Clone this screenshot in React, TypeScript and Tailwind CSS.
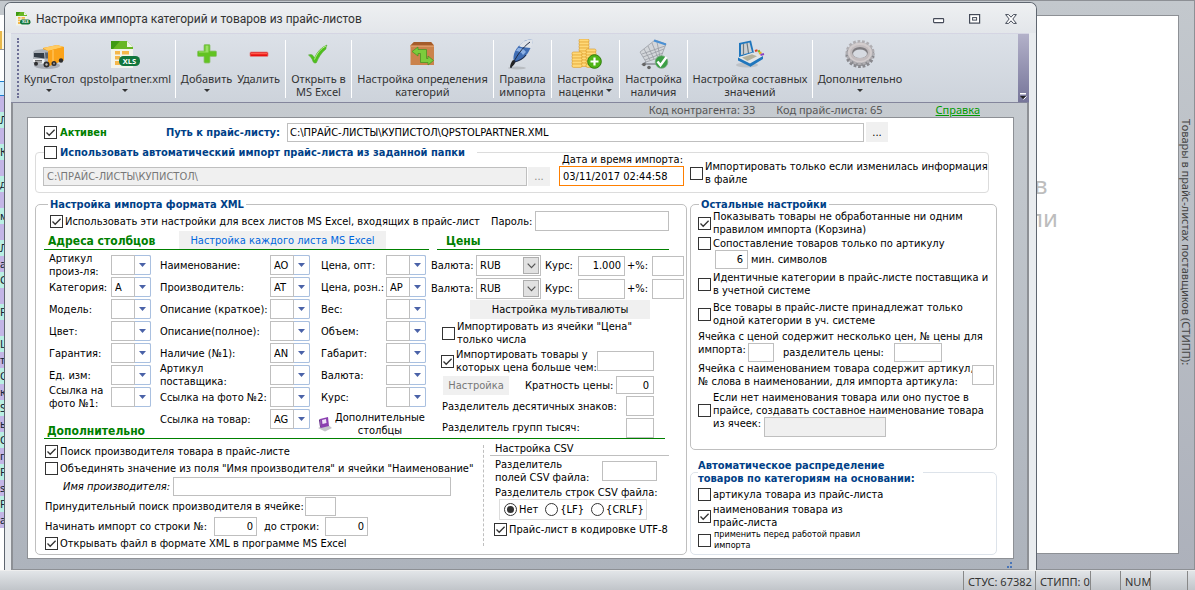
import { useId, type ReactNode } from "react";

/* ---------- basic controls ---------- */

type CheckProps = {
  children: ReactNode;
  checked?: boolean;
  className?: string;
  gap?: string;
};

function Check({ children, checked = false, className = "", gap = "gap-[2px]" }: CheckProps) {
  return (
    <label className={`flex items-center whitespace-nowrap ${gap} ${className}`}>
      <span className="relative block h-[13px] w-[13px] shrink-0">
        <input
          type="checkbox"
          defaultChecked={checked}
          className="peer block h-[13px] w-[13px] appearance-none border border-[#333] bg-white"
        />
        <svg
          viewBox="0 0 13 13"
          className="pointer-events-none absolute inset-0 hidden h-[13px] w-[13px] peer-checked:block"
        >
          <path d="M2.5 6.5 5.2 9.3 10.6 3.7" fill="none" stroke="#333" strokeWidth="1.3" />
        </svg>
      </span>
      <span>{children}</span>
    </label>
  );
}

function Radio({ label, checked = false }: { label: string; checked?: boolean }) {
  return (
    <label className="flex items-center gap-[2px] whitespace-nowrap">
      <span className="relative block h-[13px] w-[13px] shrink-0">
        <input
          type="radio"
          name="row-separator"
          defaultChecked={checked}
          className="peer block h-[13px] w-[13px] appearance-none rounded-full border border-[#333] bg-white"
        />
        <span className="pointer-events-none absolute inset-[3px] hidden rounded-full bg-[#333] peer-checked:block" />
      </span>
      {label}
    </label>
  );
}

type BoxProps = { label: string; value?: string; className?: string; disabled?: boolean };

function Box({ label, value = "", className = "", disabled = false }: BoxProps) {
  return (
    <input
      type="text"
      aria-label={label}
      defaultValue={value}
      disabled={disabled}
      className={`block h-5 shrink-0 rounded-none border border-[#bfbfbf] px-[3px] outline-none ${
        disabled ? "bg-[#f0f0f0] text-[#777]" : "bg-white"
      } ${className}`}
    />
  );
}

/* Column picker: narrow value cell and a separate arrow cell */
function Combo({ id, value = "" }: { id: string; value?: string }) {
  return (
    <span className="relative flex h-5 w-10 shrink-0">
      <select
        id={id}
        defaultValue={value}
        className="h-5 w-10 appearance-none rounded-r-[2px] border border-[#bfbfbf] border-r-[#a9c0e0] bg-white pl-[3px]"
      >
        <option value={value}>{value}</option>
      </select>
      <span className="pointer-events-none absolute top-0 right-0 flex h-5 w-[17px] items-center justify-center rounded-r-[2px] border border-[#a9c0e0] border-l-[#bfbfbf]">
        <svg viewBox="0 0 7 4" className="h-1 w-[7px]">
          <path d="M0 0h7L3.500 4z" fill="#4a62a8" />
        </svg>
      </span>
    </span>
  );
}

function Currency({ id }: { id: string }) {
  return (
    <span className="relative flex h-[21px] w-[65px] shrink-0">
      <select id={id} className="h-[21px] w-[65px] appearance-none border border-[#bfbfbf] bg-white pl-[3px]">
        <option>RUB</option>
      </select>
      <span className="pointer-events-none absolute top-[2px] right-[2px] flex h-[17px] w-4 items-center justify-center border border-[#adadad] bg-[#e1e1e1]">
        <svg viewBox="0 0 9 6" className="h-[6px] w-[9px]">
          <path d="M.7.7 4.500 4.700 8.300.7" fill="none" stroke="#555" strokeWidth="1.200" />
        </svg>
      </span>
    </span>
  );
}

function ColumnField({ label, value, width }: { label: ReactNode; value?: string; width: string }) {
  const id = useId();
  return (
    <div className="flex h-[22px] items-center">
      <label htmlFor={id} className={`shrink-0 whitespace-nowrap ${width}`}>
        {label}
      </label>
      <Combo id={id} value={value} />
    </div>
  );
}

const plainButton = "bg-[#f0f0f0] text-center whitespace-nowrap";

/* ---------- toolbar icons ---------- */

const ic = "h-8 w-8";

function TruckIcon() {
  return (
    <svg viewBox="0 0 32 32" className={ic}>
      <ellipse cx="14" cy="26.500" rx="13" ry="3.500" fill="#7d828c" opacity=".5" />
      <path d="M10 9 24 6l7 2v13l-15 6-6-4z" fill="#f59a0c" />
      <path d="m10 9 14-3 7 2-16 4z" fill="#ffcb62" />
      <path d="M15 12 31 8v13l-15 6z" fill="#fba31a" />
      <path d="M20 11v14" stroke="#ffb945" strokeWidth="2" />
      <path d="M0 14c0-1.500 1-2.500 3-3l7-1 5 2v13l-3 2-12-3z" fill="#aeb4bb" />
      <path d="M1 14h10l.5 5.500L1 18z" fill="#333c46" />
      <path d="M12 13.500h3v6h-2.500z" fill="#59636e" />
      <path d="M0 20h11.500v5L0 23z" fill="#eef0f2" />
      <path d="M2 21.500h7M2 23h7" stroke="#444" strokeWidth=".8" />
      <g fill="#2e2e30">
        <circle cx="13.500" cy="25.500" r="3" />
        <circle cx="3" cy="24.800" r="2" />
        <circle cx="21" cy="24.500" r="2.500" />
        <circle cx="28" cy="21.500" r="2.200" />
      </g>
      <circle cx="13.500" cy="25.500" r="1.200" fill="#bbb" />
      <circle cx="21" cy="24.500" r="1" fill="#999" />
    </svg>
  );
}

function XlsIcon({ className = ic }: { className?: string }) {
  return (
    <svg viewBox="0 0 32 32" className={className}>
      <path d="M2 2h16l6 6v21H2z" fill="#f2f4ec" />
      <path d="M2 2h16l6 6v2H2z" fill="#68b723" />
      <path d="M2 2h9L4 10H2z" fill="#3f9a14" />
      <path d="m18 2 6 6h-6z" fill="#eef6e4" />
      <g fill="#f5b84a">
        <path d="M6 12h5v3.500H6zM13 12h7v3.500h-7zM6 17h5v3.500H6zM13 17h7v3.500h-7zM6 22h5v4H6zM13 22h7v4h-7z" />
      </g>
      <rect x="10" y="17" width="21" height="10" rx="4.500" fill="#11763c" />
      <text
        x="20.500"
        y="24.800"
        textAnchor="middle"
        fontSize="7.500"
        fontWeight="700"
        fill="#fff"
        fontFamily="Open Sans, sans-serif"
      >
        XLS
      </text>
    </svg>
  );
}

function PlusIcon() {
  return (
    <svg viewBox="0 0 32 32" className={ic}>
      <path
        d="M14 5.500h4a1 1 0 0 1 1 1V12h5.500a1 1 0 0 1 1 1v3.500a1 1 0 0 1-1 1H19V23a1 1 0 0 1-1 1h-4a1 1 0 0 1-1-1v-5.500H7.500a1 1 0 0 1-1-1V13a1 1 0 0 1 1-1H13V6.500a1 1 0 0 1 1-1z"
        fill="#62c322"
        stroke="#8fc074"
        strokeWidth=".8"
      />
      <path d="M14.500 6.500h3V13.500H8v-1h6.500z" fill="#9be067" />
    </svg>
  );
}

function MinusIcon() {
  return (
    <svg viewBox="0 0 32 32" className={ic}>
      <rect x="7" y="13" width="18" height="4.500" rx="1" fill="#e81010" stroke="#d88" strokeWidth=".8" />
      <path d="M8 14h16v1.300H8z" fill="#ff5a4a" />
    </svg>
  );
}

function TickIcon() {
  return (
    <svg viewBox="0 0 32 32" className={ic}>
      <path
        d="M6.500 16c3-1.500 5 .5 6 3C15 13 19 8.500 25 6c-1 1.500-1 3-1 4-5 4-7.500 8.500-9.500 13.500-1 1-3 .5-3.500-1-1-3-2-4.500-4.500-6.500z"
        fill="#4fc01d"
        stroke="#5aa83a"
        strokeWidth=".6"
      />
      <path d="M12.500 20.500C15 14 19 9.500 24 7" fill="none" stroke="#b6ee8d" strokeWidth="1" />
    </svg>
  );
}

function CrateIcon() {
  return (
    <svg viewBox="0 0 32 32" className={ic}>
      <path d="M8 3h17l3 3.500V26H4.500V6.500z" fill="#cb834c" />
      <path d="M8 3h17l3 3.500H4.500z" fill="#a55c2a" />
      <path d="M4.500 6.500H28V8H4.500z" fill="#dc9a66" />
      <path
        d="m6 12.500 6-4.500v2.500h8.500v9H22V17l5.500 4.500L22 26v-2.500h-7.500v-9H12V17z"
        fill="#7ccc3c"
        stroke="#3f9420"
        strokeWidth=".7"
      />
    </svg>
  );
}

function FeatherIcon() {
  return (
    <svg viewBox="0 0 32 32" className={ic}>
      <ellipse cx="11" cy="29" rx="9" ry="1.500" fill="#888" opacity=".35" />
      <path d="M27 0C18 0 10 8 8 15c-1 4-.5 6 0 8 6-1 12-5 15-11 2-4 4-8 4-12z" fill="#3f6db4" />
      <path d="M27 0c-6 0-11 3-14 7l2 1 10 1c1.500-3 2-6 2-9z" fill="#dfe3e9" />
      <path d="M12 9c3-.5 6 1 8 4l-3 3c-2-3-4-4-7-4z" fill="#8cb0e4" />
      <path d="M24 3C16 9 10 17 5 29" fill="none" stroke="#1f2b44" strokeWidth="1" />
      <path d="M4 29c0-3 1-6 3-8l3 1c-1 3-3 5-6 7z" fill="#222" />
      <path d="M8 23c5-1 9-3 12-7" stroke="#1d2c4d" strokeWidth="1.200" fill="none" />
    </svg>
  );
}

function CoinStack({ x, y, n }: { x: number; y: number; n: number }) {
  return (
    <g>
      {Array.from({ length: n }, (_, i) => (
        <rect
          key={i}
          x={x}
          y={y + i * 3}
          width="10"
          height="3.400"
          rx="1.500"
          fill="#ffd978"
          stroke="#d9961f"
          strokeWidth=".6"
        />
      ))}
    </g>
  );
}

function CoinsIcon() {
  return (
    <svg viewBox="0 0 32 32" className={ic}>
      <CoinStack x={9} y={0} n={9} />
      <CoinStack x={16} y={10} n={6} />
      <CoinStack x={2} y={13} n={5} />
      <circle cx="24.500" cy="22.500" r="6.800" fill="#4fb516" stroke="#2d7d0a" />
      <path d="M24.500 18.500v8M20.500 22.500h8" stroke="#fff" strokeWidth="2.200" />
    </svg>
  );
}

function CartIcon() {
  return (
    <svg viewBox="0 0 32 32" className={ic}>
      <path d="m2 13 15-12 11 4-5 13-15 5z" fill="#d3d6da" stroke="#9a9ea5" strokeWidth=".8" />
      <path
        d="m4 15 23-8M5 18l21-8M7 21l18-7M6 10l6 11M10 7l6 13M14 4l6 15M19 3l3 15"
        stroke="#989ca3"
        strokeWidth=".8"
      />
      <path d="m16 1.500 12 4" stroke="#4a90d4" strokeWidth="2" />
      <path d="m8 23-3 2h14" stroke="#8a8f96" strokeWidth="1.300" fill="none" />
      <circle cx="6" cy="25.500" r="1.800" fill="#666" />
      <circle cx="11" cy="28.500" r="1.800" fill="#666" />
      <circle cx="23.500" cy="23" r="6.300" fill="#3c9f45" stroke="#7fa987" strokeWidth=".8" />
      <path d="m19.500 22.500 3 3.800 6-8.300" fill="none" stroke="#fff" strokeWidth="2.400" />
    </svg>
  );
}

function ScannerIcon() {
  return (
    <svg viewBox="0 0 32 32" className={ic}>
      <ellipse cx="13" cy="26" rx="11" ry="2.500" fill="#888" opacity=".3" />
      <path d="M5 4 17 1.500 20 14 5 18z" fill="#1f76bd" />
      <path d="m7 5.500 8.500-2L18 13 7 16z" fill="#cdd2d5" />
      <path d="M9.500 5v10.500M13 4l1.500 10" stroke="#6e7a82" strokeWidth="1.200" />
      <path d="m4 18.500 15-5 10 3.500-13 8z" fill="#e2e5e6" />
      <path d="m4 18.500 12 6v3L4 21.500zM16 24.500 29 17v3l-13 8z" fill="#1f76bd" />
      <path d="m8 18.500 10-3.300 5 2-9.500 4.800z" fill="#b3b19c" />
      <path d="m21 12 2.500-.8" stroke="#e04020" strokeWidth="2" />
      <path d="m24 12.500 2-.8" stroke="#7ab82a" strokeWidth="2" />
      <path d="m25 14.500 2.500-1" stroke="#e8b020" strokeWidth="2" />
      <path d="m26.500 16 3.500-1" stroke="#8a40c0" strokeWidth="2" />
    </svg>
  );
}

function GearIcon() {
  return (
    <svg viewBox="0 0 32 32" className={ic}>
      <ellipse cx="16" cy="16.500" rx="12.500" ry="10.500" fill="#98989c" stroke="#88888d" strokeWidth="4" strokeDasharray="2.600 1.700" />
      <ellipse cx="16" cy="13.500" rx="12.500" ry="10.500" fill="#bfbdc0" stroke="#b0aeb2" strokeWidth="4" strokeDasharray="2.600 1.700" />
      <ellipse cx="16" cy="13.500" rx="12" ry="10" fill="#d2cccd" />
      <ellipse cx="16" cy="14" rx="10" ry="8" fill="#c2bcbe" />
      <ellipse cx="16" cy="13.500" rx="7.800" ry="5.500" fill="#7e7c80" />
      <ellipse cx="16" cy="14.800" rx="7" ry="4.300" fill="#d6dae1" />
    </svg>
  );
}

function Arrow() {
  return (
    <svg viewBox="0 0 6 3" className="inline-block h-[3px] w-[6px] align-[4px]">
      <path d="M0 0h6L3 3z" fill="#333" />
    </svg>
  );
}

function ToolButton({ icon, children }: { icon: ReactNode; children: ReactNode }) {
  return (
    <button className="flex flex-col items-center whitespace-nowrap text-center leading-[13px]">
      {icon}
      <span className="mt-px">{children}</span>
    </button>
  );
}

function ToolGroup({ width, children }: { width: string; children: ReactNode }) {
  return <div className={`flex shrink-0 items-start justify-center gap-[5px] ${width}`}>{children}</div>;
}

function Divider() {
  return <div className="my-px h-[58px] w-px shrink-0 bg-white" />;
}

function Toolbar() {
  return (
    <div className="flex h-[70px] border-t border-b border-t-[#d5d5e3] border-b-[#84869c] bg-linear-to-b from-[#dce1e8] to-[#cdd3db] text-[11px] text-[#333]">
      <div className="mt-1 ml-[6px] h-[60px] border-l-2 border-dotted border-[#6d6f96]" />
      <div className="ml-px flex flex-1 items-start overflow-hidden pt-[5px]">
        <ToolGroup width="w-[155px]">
          <ToolButton icon={<TruckIcon />}>
            КупиСтол
            <br />
            <Arrow />
          </ToolButton>
          <ToolButton icon={<XlsIcon />}>
            qpstolpartner.xml
            <br />
            <Arrow />
          </ToolButton>
        </ToolGroup>
        <Divider />
        <ToolGroup width="w-[109px]">
          <ToolButton icon={<PlusIcon />}>
            Добавить
            <br />
            <Arrow />
          </ToolButton>
          <ToolButton icon={<MinusIcon />}>Удалить</ToolButton>
        </ToolGroup>
        <Divider />
        <ToolGroup width="w-[65px]">
          <ToolButton icon={<TickIcon />}>
            Открыть в<br />
            MS Excel
          </ToolButton>
        </ToolGroup>
        <Divider />
        <ToolGroup width="w-[141px]">
          <ToolButton icon={<CrateIcon />}>
            Настройка определения
            <br />
            категорий
          </ToolButton>
        </ToolGroup>
        <Divider />
        <ToolGroup width="w-[57px]">
          <ToolButton icon={<FeatherIcon />}>
            Правила
            <br />
            импорта
          </ToolButton>
        </ToolGroup>
        <Divider />
        <ToolGroup width="w-[67px]">
          <ToolButton icon={<CoinsIcon />}>
            Настройка
            <br />
            наценки <Arrow />
          </ToolButton>
        </ToolGroup>
        <Divider />
        <ToolGroup width="w-[67px]">
          <ToolButton icon={<CartIcon />}>
            Настройка
            <br />
            наличия
          </ToolButton>
        </ToolGroup>
        <Divider />
        <ToolGroup width="w-[124px]">
          <ToolButton icon={<ScannerIcon />}>
            Настройка составных
            <br />
            значений
          </ToolButton>
        </ToolGroup>
        <Divider />
        <ToolGroup width="w-[94px]">
          <ToolButton icon={<GearIcon />}>
            Дополнительно
            <br />
            <Arrow />
          </ToolButton>
        </ToolGroup>
      </div>
      <button
        aria-label="Параметры панели"
        className="flex w-[11px] items-end justify-center bg-linear-to-b from-[#b3b1c9] to-[#77769a] pb-[2px]"
      >
        <svg viewBox="0 0 7 7" className="h-[7px] w-[7px]">
          <path d="M0 0h6v1.500H0z" fill="#fff" />
          <path d="M0 3h6L3 6z" fill="#222" />
          <path d="m3.500 6.500 3-3" stroke="#fff" />
        </svg>
      </button>
    </div>
  );
}

/* ---------- form sections ---------- */

function TitleBar() {
  return (
    <header className="flex h-[30px] items-center bg-linear-to-b from-[#eef0f2] to-[#e3e6ea] pt-[2px] pr-[19px] pl-[10px] font-['Roboto','Noto_Sans',sans-serif] text-[12px] text-[#333]">
      <XlsIcon className="h-4 w-4" />
      <h1 className="ml-[5px] flex-1">Настройка импорта категорий и товаров из прайс-листов</h1>
      <div className="flex gap-6">
        <button aria-label="Свернуть">
          <svg viewBox="0 0 12 12" className="h-3 w-3">
            <rect x=".6" y="5.600" width="10" height="4" rx=".5" fill="#fff" stroke="#444a58" strokeWidth="1.100" />
          </svg>
        </button>
        <button aria-label="Развернуть">
          <svg viewBox="0 0 12 12" className="h-3 w-3">
            <rect x=".6" y="1.600" width="10" height="8.500" fill="#fff" stroke="#444a58" strokeWidth="1.200" />
            <rect x="3.600" y="4.600" width="4" height="2.500" fill="#fff" stroke="#444a58" />
          </svg>
        </button>
        <button aria-label="Закрыть">
          <svg viewBox="0 0 12 12" className="h-3 w-3">
            <path
              d="M.6 1.600h3L6 4.200l2.400-2.600h3L7.800 6l3.600 4.400h-3L6 7.800l-2.400 2.600h-3L4.200 6z"
              fill="#fff"
              stroke="#444a58"
              strokeWidth="1"
            />
          </svg>
        </button>
      </div>
    </header>
  );
}

function PathRow() {
  return (
    <div className="ml-[9px] flex h-5 items-center">
      <Check checked className="w-[122px] font-bold text-[#008000]" gap="gap-[3px]">
        Активен
      </Check>
      <label htmlFor="price-path" className="w-[121px] font-bold whitespace-nowrap text-[#003f87]">
        Путь к прайс-листу:
      </label>
      <input
        id="price-path"
        defaultValue="C:\ПРАЙС-ЛИСТЫ\КУПИСТОЛ\QPSTOLPARTNER.XML"
        className="h-[19px] min-w-0 flex-1 border border-[#bfbfbf] px-[2px] outline-none"
      />
      <button className={`${plainButton} mr-[109px] ml-[2px] h-5 w-[22px]`}>...</button>
    </div>
  );
}

function AutoImport() {
  return (
    <fieldset className="mt-[4px] mr-2 h-[47px] rounded-[4px] border border-[#dcdcdc] pl-[7px]">
      <legend className="ml-[1px] pr-3 leading-[13px]">
        <Check className="font-bold text-[#003f87]" gap="gap-[3px]">
          Использовать автоматический импорт прайс-листа из заданной папки
        </Check>
      </legend>
      <div className="-mt-[6px] flex items-end">
        <Box
          label="Папка с прайс-листами"
          value="C:\ПРАЙС-ЛИСТЫ\КУПИСТОЛ\"
          disabled
          className="h-[19px] w-0 min-w-0 flex-1"
        />
        <button disabled className={`${plainButton} ml-px h-[19px] w-[22px] text-[#888]`}>
          ...
        </button>
        <div className="ml-[9px] flex w-[125px] flex-col">
          <label htmlFor="import-date" className="pl-[3px] whitespace-nowrap">
            Дата и время импорта:
          </label>
          <input
            id="import-date"
            defaultValue="03/11/2017 02:44:58"
            className="h-5 border border-[#ff7f00] px-[3px] outline-none"
          />
        </div>
        <Check className="ml-[6px] w-[298px]">
          Импортировать только если изменилась информация
          <br />в файле
        </Check>
      </div>
    </fieldset>
  );
}

const columnsA: [ReactNode, string?][] = [
  [<>Артикул<br />произ-ля:</>],
  ["Категория:", "A"],
  ["Модель:"],
  ["Цвет:"],
  ["Гарантия:"],
  ["Ед. изм:"],
  [<>Ссылка на<br />фото №1:</>],
];

const columnsB: [ReactNode, string?][] = [
  ["Наименование:", "AO"],
  ["Производитель:", "AT"],
  ["Описание (краткое):"],
  ["Описание(полное):"],
  ["Наличие (№1):", "AN"],
  [<>Артикул<br />поставщика:</>],
  ["Ссылка на фото №2:"],
  ["Ссылка на товар:", "AG"],
];

const columnsC: [ReactNode, string?][] = [
  ["Цена, опт:"],
  ["Цена, розн.:", "AP"],
  ["Вес:"],
  ["Объем:"],
  ["Габарит:"],
  ["Валюта:"],
  ["Курс:"],
];

function ColumnAddresses() {
  return (
    <div className="flex pl-[13px]">
      <div className="flex w-[111px] flex-col">
        {columnsA.map(([label, value], i) => (
          <ColumnField key={i} label={label} value={value} width="w-[62px]" />
        ))}
        <h3 className="mt-auto -ml-[2px] text-[12px] leading-[13px] font-bold text-[#008000]">Дополнительно</h3>
      </div>
      <div className="w-[161px]">
        {columnsB.map(([label, value], i) => (
          <ColumnField key={i} label={label} value={value} width="w-[110px]" />
        ))}
      </div>
      <div className="w-[110px]">
        {columnsC.map(([label, value], i) => (
          <ColumnField key={i} label={label} value={value} width="w-[65px]" />
        ))}
        <button className="mt-[3px] -ml-[4px] flex items-center gap-[2px] whitespace-nowrap">
          <svg viewBox="0 0 16 16" className="h-4 w-4">
            <path d="m1 12 9-4 5 4-7 3.500z" fill="#c4c4ca" />
            <path d="m3 3 8-2 1 9-8 2z" fill="#8b3fb0" />
            <path d="m5 4 4-1 .5 4-4 1z" fill="#efe2f7" />
            <path d="m2 4 1-1 1 9-1-1z" fill="#5b2080" />
          </svg>
          <span>
            Дополнительные
            <br />
            столбцы
          </span>
        </button>
      </div>
    </div>
  );
}

function RateRow({ n, rate }: { n: number; rate?: string }) {
  return (
    <div className="flex h-[23px] items-center whitespace-nowrap">
      <label htmlFor={`currency-${n}`} className="w-[45px]">
        Валюта:
      </label>
      <Currency id={`currency-${n}`} />
      <span className="ml-1 w-[33px]">Курс:</span>
      <Box label={`Курс ${n}`} value={rate} className="w-[47px] text-right" />
      <span className="ml-[2px] w-[25px]">+%:</span>
      <Box label={`Процент ${n}`} className="w-8" />
    </div>
  );
}

function Prices() {
  return (
    <div className="w-[255px] shrink-0">
      <RateRow n={1} rate="1.000" />
      <RateRow n={2} />
      <button className={`${plainButton} ml-[39px] block h-[19px] w-[180px]`}>Настройка мультивалюты</button>
      <Check className="mt-px ml-[11px]">
        Импортировать из ячейки "Цена"
        <br />
        только числа
      </Check>
      <div className="mt-[2px] flex items-center">
        <Check checked className="ml-[10px] w-[156px]">
          Импортировать товары у<br />
          которых цена больше чем:
        </Check>
        <Box label="Минимальная цена" className="w-[57px]" />
      </div>
      <div className="mt-[1px] flex h-5 items-center">
        <button disabled className={`${plainButton} ml-3 h-[19px] w-[66px] text-[#777]`}>
          Настройка
        </button>
        <label htmlFor="multiplicity" className="ml-4 w-[91px] whitespace-nowrap">
          Кратность цены:
        </label>
        <input
          id="multiplicity"
          defaultValue="0"
          className="h-[18px] w-[38px] border border-[#bfbfbf] px-1 text-right outline-none"
        />
      </div>
      <div className="flex h-[22px] items-center">
        <span className="ml-[11px] w-[184px] whitespace-nowrap">Разделитель десятичных знаков:</span>
        <Box label="Разделитель десятичных знаков" className="w-7" />
      </div>
      <div className="flex h-[21px] items-center">
        <span className="ml-[11px] w-[184px] whitespace-nowrap">Разделитель групп тысяч:</span>
        <Box label="Разделитель групп тысяч" className="w-7" />
      </div>
    </div>
  );
}

function Extra() {
  return (
    <div className="flex flex-1">
      <div className="flex min-w-0 flex-1 flex-col pt-[4px] pl-[9px]">
        <Check checked className="h-[17px]">
          Поиск производителя товара в прайс-листе
        </Check>
        <Check className="h-[17px]">
          Объединять значение из поля "Имя производителя" и ячейки "Наименование"
        </Check>
        <div className="flex h-[19px] items-center">
          <label htmlFor="maker" className="ml-[18px] w-[110px] whitespace-nowrap italic">
            Имя производителя:
          </label>
          <input id="maker" className="mr-8 h-[19px] min-w-0 flex-1 border border-[#bfbfbf] outline-none" />
        </div>
        <div className="flex h-5 items-center">
          <span className="w-[260px] whitespace-nowrap">Принудительный поиск производителя в ячейке:</span>
          <Box label="Ячейка производителя" className="h-[19px] w-[31px]" />
        </div>
        <div className="flex h-5 items-center whitespace-nowrap">
          <span className="w-[169px]">Начинать импорт со строки №:</span>
          <Box label="Начальная строка" value="0" className="h-[19px] w-[43px] text-right" />
          <span className="ml-[7px] w-[61px]">до строки:</span>
          <Box label="Конечная строка" value="0" className="h-[19px] w-[43px] text-right" />
        </div>
        <Check checked className="h-[15px]">
          Открывать файл в формате XML в программе MS Excel
        </Check>
      </div>
      <div className="mt-[6px] mb-2 w-[203px] border-l border-dashed border-[#bfbfbf] pl-[6px]">
        <h4 className="-mt-[3px] mr-[17px] border-b border-[#bfbfbf] pl-[5px]">Настройка CSV</h4>
        <div className="mt-[2px] flex items-center pl-[5px]">
          <span className="w-[107px] whitespace-nowrap">
            Разделитель
            <br />
            полей CSV файла:
          </span>
          <Box label="Разделитель полей CSV файла" className="w-[55px]" />
        </div>
        <div className="mt-[2px] pl-[5px] whitespace-nowrap">Разделитель строк CSV файла:</div>
        <div className="ml-[9px] flex h-[21px] w-[148px] items-center gap-[7px] border border-[#dcdcdc] pl-1">
          <Radio label="Нет" checked />
          <Radio label="{LF}" />
          <Radio label="{CRLF}" />
        </div>
        <Check checked className="mt-[3px] ml-1">
          Прайс-лист в кодировке UTF-8
        </Check>
      </div>
    </div>
  );
}

function XmlSettings() {
  return (
    <fieldset className="flex min-w-0 flex-1 flex-col rounded-[5px] border border-[#bfbfbf]">
      <legend className="ml-3 px-[2px] leading-[13px] font-bold text-[#003f87]">Настройка импорта формата XML</legend>
      <div className="flex h-5 items-center">
        <Check checked className="ml-[14px] w-[441px]">
          Использовать эти настройки для всех листов MS Excel, входящих в прайс-лист
        </Check>
        <label htmlFor="password" className="w-[44px] whitespace-nowrap">
          Пароль:
        </label>
        <input
          id="password"
          type="password"
          className="mr-[17px] h-5 min-w-0 flex-1 border border-[#bfbfbf] outline-none"
        />
      </div>
      <div className="flex h-[19px] gap-2">
        <div className="ml-2 flex w-[385px] border-b border-[#008000]">
          <h3 className="w-[135px] pt-[4px] pl-1 text-[12px] font-bold text-[#008000]">Адреса столбцов</h3>
          <button className={`${plainButton} h-[18px] w-[207px] text-[#0066dd]`}>
            Настройка каждого листа MS Excel
          </button>
        </div>
        <h3 className="mr-[17px] flex-1 border-b border-[#008000] pt-[4px] pl-[9px] text-[12px] font-bold text-[#008000]">
          Цены
        </h3>
      </div>
      <div className="flex justify-between pt-[4px]">
        <ColumnAddresses />
        <Prices />
      </div>
      <div className="mr-[21px] ml-2 h-px bg-[#008000]" />
      <Extra />
    </fieldset>
  );
}

function OtherSettings() {
  return (
    <fieldset className="h-[252px] rounded-[5px] border border-[#bfbfbf] pl-[7px]">
      <legend className="ml-px px-[2px] leading-[13px] font-bold text-[#003f87]">Остальные настройки</legend>
      <div className="flex flex-col">
        <Check checked className="-mt-[1px]">
          Показывать товары не обработанные ни одним
          <br />
          правилом импорта (Корзина)
        </Check>
        <Check className="mt-[1px]">Сопоставление товаров только по артикулу</Check>
        <div className="flex items-center pl-[17px]">
          <Box label="Минимум символов" value="6" className="h-[19px] w-[33px] pr-[4px] text-right" />
          <span className="ml-[3px]">мин. символов</span>
        </div>
        <Check className="mt-[2px]">
          Идентичные категории в прайс-листе поставщика и<br />в учетной системе
        </Check>
        <Check className="mt-1">
          Все товары в прайс-листе принадлежат только
          <br />
          одной категории в уч. системе
        </Check>
        <div className="mt-[3px] whitespace-nowrap">Ячейка с ценой содержит несколько цен, № цены для</div>
        <div className="flex h-[18px] whitespace-nowrap">
          <span className="w-[50px]">импорта:</span>
          <Box label="Номер цены" className="h-[19px] w-[26px]" />
          <span className="ml-[9px] w-[111px] pt-[3px]">разделитель цены:</span>
          <Box label="Разделитель цены" className="h-[19px] w-12" />
        </div>
        <div className="mt-[1px] flex items-center whitespace-nowrap">
          <span className="w-[274px]">
            Ячейка с наименованием товара содержит артикул,
            <br />№ слова в наименовании, для импорта артикула:
          </span>
          <Box label="Номер слова" className="w-[22px]" />
        </div>
        <Check className="mt-[3px]">
          Если нет наименования товара или оно пустое в<br />
          прайсе, создавать составное наименование товара
          <span className="flex h-[13px]">
            <span className="w-[51px]">из ячеек:</span>
            <Box label="Ячейки наименования" disabled className="w-[122px]" />
          </span>
        </Check>
      </div>
    </fieldset>
  );
}

function AutoDistribution() {
  return (
    <fieldset className="mt-[9px] h-[96px] rounded-[5px] border border-[#dde3ea] pl-[7px]">
      <legend className="pr-2 leading-[13px] font-bold text-[#003f87]">
        Автоматическое распределение
        <br />
        товаров по категориям на основании:
      </legend>
      <div className="flex flex-col">
        <Check className="mt-[3px]">артикула товара из прайс-листа</Check>
        <Check checked className="mt-[2px]">
          наименования товара из
          <br />
          прайс-листа
        </Check>
        <Check className="text-[9px] leading-[11px]" gap="gap-[3px]">
          применить перед работой правил
          <br />
          импорта
        </Check>
      </div>
    </fieldset>
  );
}

function Dialog() {
  return (
    <section className="mt-px flex min-w-0 flex-1 flex-col rounded-t-[7px] border border-b-0 border-[#5f6670] bg-[#e9ecef] pr-[7px] pl-[6px]">
      <div className="-mr-[7px] -ml-[6px] overflow-hidden rounded-t-[6px]">
        <TitleBar />
      </div>
      <Toolbar />
      <div className="flex flex-1 flex-col border-x-2 border-b border-[#8d9095] bg-linear-to-b from-[#c6cbd0] to-[#adb3bc] pr-[13px] pl-[14px]">
        <div className="flex h-[14px] items-center justify-end gap-[21px] pr-[34px] text-[11px] leading-[14px] text-[#555]">
          <span>Код контрагента: 33</span>
          <span>Код прайс-листа: 65</span>
          <a href="#help" className="ml-8 text-[#009a00] underline">
            Справка
          </a>
        </div>
        <form
          onSubmit={(e) => e.preventDefault()}
          className="flex flex-1 flex-col border border-[#8d9095] bg-white pt-1 pr-4 pb-[3px] pl-[7px] font-['DejaVu_Sans_Condensed','DejaVu_Sans',sans-serif] text-[11px] leading-[13px] text-black"
        >
          <PathRow />
          <AutoImport />
          <div className="mt-[5px] flex flex-1 gap-[3px]">
            <XmlSettings />
            <div className="w-[307px] shrink-0">
              <OtherSettings />
              <AutoDistribution />
            </div>
          </div>
        </form>
        <div className="flex h-[10px] items-end justify-end">
          <svg viewBox="0 0 8 8" className="h-2 w-2">
            <path d="M4 1h2v2H4zM4 5h2v2H4zM1 5h2v2H1z" fill="#4a76b8" />
          </svg>
        </div>
      </div>
    </section>
  );
}

/* ---------- background window ---------- */

const rows = [
  ["Л", 1], ["", 0], ["К", 1], ["", 0], ["д", 1], ["", 0], ["м", 1], ["", 0], ["Л", 1], ["а", 0],
  ["С", 1], ["", 0], ["Р", 1], ["", 0], ["L", 1], ["т", 0], ["О", 1], ["к", 0], ["S", 1], ["ь", 0],
  ["О", 1], ["г", 0], ["Р", 1], ["s", 0], ["Р", 1], ["а", 0],
] as const;

function ListEdge() {
  return (
    <div className="flex w-1 shrink-0 flex-col overflow-hidden bg-white text-[11px] leading-4 text-[#123]">
      <div className="h-[14px] bg-[#c3c8cd]" />
      <div className="h-4 bg-white" />
      <div className="h-[18px] border-l-2 border-[#e8b84a] bg-[#fff6dc]" />
      <div className="h-8 border-t border-[#999]" />
      <div className="h-[15px] border-y border-[#1a7fd0] bg-[#cfeafc]" />
      <div className="h-4 bg-[#c3b5e6]" />
      {rows.map(([text, aqua], i) => (
        <div key={i} className={`h-4 overflow-hidden ${aqua ? "bg-[#b9efe3]" : "bg-[#c3b5e6]"}`}>
          {text}
        </div>
      ))}
    </div>
  );
}

export default function App() {
  return (
    <div className="flex min-h-screen flex-col overflow-hidden bg-[#c3c8cd] font-['Noto_Sans',sans-serif]">
      <main className="flex flex-1 border-t border-[#8d9095]">
        <ListEdge />
        <Dialog />
        <div className="flex w-[158px] shrink-0 border-r border-b border-[#8d9095] bg-linear-to-b from-[#c3c8cd] to-[#adb1bb] pt-[14px] pb-[15px]">
          <div className="flex-1 overflow-hidden border border-l-0 border-[#8d9095] bg-white pt-[152px] text-[24px] leading-[33px] text-[#bdbdbd]">
            <p className="-ml-[3px]">в</p>
            <p className="-ml-2">ли</p>
          </div>
          <aside className="w-[15px] pt-[104px] text-[11px] leading-[15px] whitespace-nowrap text-[#444] [writing-mode:vertical-rl]">
            Товары в прайс-листах поставщиков (СТИПП):
          </aside>
        </div>
      </main>
      <footer className="flex h-[21px] justify-end border-t border-[#eee] bg-linear-to-b from-[#e2e5e8] to-[#bfc3c8] text-[11px] leading-[22px] text-[#333]">
        <span className="w-[72px] border-l border-[#888] pl-1 whitespace-nowrap">СТУС: 67382</span>
        <span className="w-[55px] border-l border-[#888] pl-1 whitespace-nowrap">СТИПП: 0</span>
        <span className="w-[30px] border-l border-[#888]" />
        <span className="w-[30px] border-l border-[#888] pl-1">NUM</span>
        <span className="w-[37px] border-l border-[#888]" />
        <span className="w-2 border-l border-[#888]" />
      </footer>
    </div>
  );
}
